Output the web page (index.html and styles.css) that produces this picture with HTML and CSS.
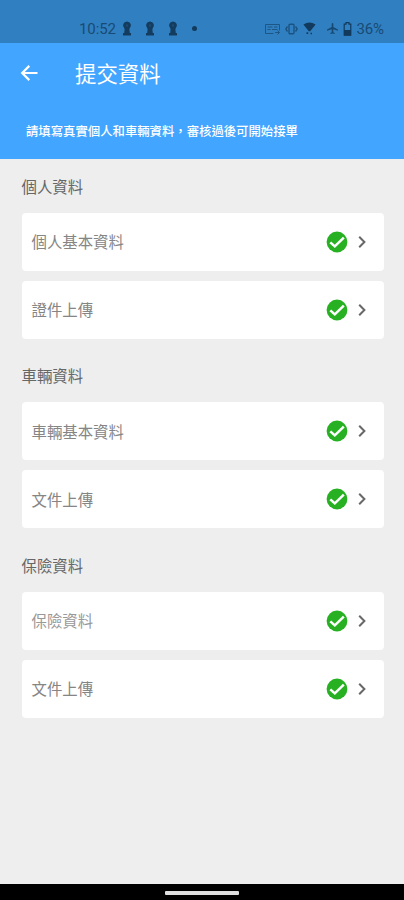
FILE: index.html
```
<!DOCTYPE html>
<html lang="zh-Hant">
<head>
<meta charset="utf-8">
<title>提交資料</title>
<link rel="stylesheet" href="styles.css">
</head>
<body>
<svg class="defs" width="0" height="0">
  <symbol id="pawn" viewBox="0 0 10 15"><path d="M5 .4a4 4 0 0 1 2.600 7L7.400 8.500l.4 3.500H9v2.600H1V12h1.200l.4-3.500-.2-1.100A4 4 0 0 1 5 .4z"/><path class="hole" d="M4.500 3.600h1v1.900h-1z"/></symbol>
  <symbol id="check" viewBox="0 0 22 22"><circle cx="11" cy="11" r="10.400" fill="#27b122"/><path d="M4.300 11.300l4.500 4.100 9-8.800" fill="none" stroke="#fff" stroke-width="2.500"/></symbol>
  <symbol id="chevron" viewBox="0 0 8 12"><path d="M1.200.8L6.400 6l-5.200 5.200" fill="none" stroke="#686868" stroke-width="2"/></symbol>
</svg>
<div class="screen">
  <div class="status">
    <span class="time">10:52</span>
    <div class="notices">
      <svg width="10" height="15"><use href="#pawn"/></svg>
      <svg width="10" height="15"><use href="#pawn"/></svg>
      <svg width="10" height="15"><use href="#pawn"/></svg>
      <i class="dot"></i>
    </div>
    <div class="system">
      <svg class="cast" width="15" height="12" viewBox="0 0 15 12" fill="none" stroke="#1d5584" stroke-width="1"><path d="M8.500 10.500H.5v-9h14v6M2.500 4h5M9 4h3.500M2.500 6.500h3M7 6.500h5.500M10 9.500h4.500M12.500 7.500l2 2-2 2"/></svg>
      <svg class="vibrate" width="13" height="12" viewBox="0 0 13 12" fill="none" stroke="#1b5281" stroke-width="1.400"><rect x="4" y="1.200" width="5" height="9.600" rx="1"/><path d="M2.500 3.500L.8 6l1.700 2.500M10.500 3.500L12.200 6l-1.700 2.500"/></svg>
      <svg class="wifi" width="13" height="13" viewBox="0 0 13 13" fill="#123a5c"><path d="M.4 2.500Q6.500-1.400 12.600 2.500L7.200 9.300H5.800zM3.500 10.300h1.700v1.700H3.500zM7.500 10.800h1.500v1.500H7.500z"/></svg>
      <svg class="plane" width="13" height="13" viewBox="0 0 24 24" fill="#174872"><path d="M22 16v-2l-8.500-5V3.500a1.500 1.500 0 0 0-3 0V9L2 14v2l8.500-2.500V19L8 20.500V22l4-1 4 1v-1.500L13.500 19v-5.500z"/></svg>
      <svg class="battery" width="9" height="14" viewBox="0 0 9 14"><path d="M3 .7h3v1.500h1.800v11H1.200v-11H3z" fill="none" stroke="#123a5c" stroke-width="1.200"/><path d="M1 8h7v5.500H1z" fill="#123a5c"/></svg>
      <span class="percent">36%</span>
    </div>
  </div>
  <header>
    <div class="bar">
      <svg width="18" height="16" viewBox="0 0 18 16" fill="none" stroke="#fff" stroke-width="2.200"><path d="M17.500 8H2.500M9.300.9L2.200 8l7.100 7.100"/></svg>
      <h1>提交資料</h1>
    </div>
    <p>請填寫真實個人和車輛資料，審核過後可開始接單</p>
  </header>
  <main>
    <section>
      <h2>個人資料</h2>
      <div class="card"><span>個人基本資料</span><svg class="check"><use href="#check"/></svg><svg class="chevron"><use href="#chevron"/></svg></div>
      <div class="card"><span>證件上傳</span><svg class="check"><use href="#check"/></svg><svg class="chevron"><use href="#chevron"/></svg></div>
    </section>
    <section>
      <h2>車輛資料</h2>
      <div class="card"><span>車輛基本資料</span><svg class="check"><use href="#check"/></svg><svg class="chevron"><use href="#chevron"/></svg></div>
      <div class="card"><span>文件上傳</span><svg class="check"><use href="#check"/></svg><svg class="chevron"><use href="#chevron"/></svg></div>
    </section>
    <section>
      <h2>保險資料</h2>
      <div class="card"><span class="light">保險資料</span><svg class="check"><use href="#check"/></svg><svg class="chevron"><use href="#chevron"/></svg></div>
      <div class="card"><span>文件上傳</span><svg class="check"><use href="#check"/></svg><svg class="chevron"><use href="#chevron"/></svg></div>
    </section>
  </main>
  <footer><i class="handle"></i></footer>
</div>
</body>
</html>
```
FILE: styles.css
```
* { box-sizing: border-box; }
body { margin: 0; font-family: Roboto, "Noto Sans CJK TC", sans-serif; }
svg { display: block; flex: none; }
h1, h2, p { margin: 0; font-weight: 400; font-family: "Noto Sans CJK TC", sans-serif; white-space: nowrap; }
.defs { position: absolute; }
.screen { width: 404px; height: 900px; display: flex; flex-direction: column; background: #eee; overflow: hidden; }

.status { height: 43px; flex: none; background: #3080c1; display: flex; align-items: center; padding: 14px 20px 0 79px; color: #194a74; font-size: 15px; }
.time { width: 43px; letter-spacing: -0.1px; }
.notices { display: flex; align-items: center; gap: 13px; fill: #143c5e; }
.hole { fill: #235f91; }
.dot { width: 5px; height: 5px; border-radius: 50%; background: #123a5c; margin-left: 1px; }
.system { margin-left: auto; display: flex; align-items: center; }
.vibrate { margin-left: 5px; }
.wifi { margin-left: 5px; }
.plane { margin-left: 10px; }
.battery { margin-left: 4px; }
.percent { margin-left: 4px; letter-spacing: -0.1px; }

header { height: 115.5px; flex: none; background: #42a5ff; color: #fff; }
.bar { height: 59px; display: flex; align-items: center; padding-left: 20px; }
.bar h1 { margin-left: 37px; font-size: 21.4px; line-height: 30px; }
header p { padding: 19px 0 0 26px; font-size: 12.36px; line-height: 20px; font-weight: 500; }

main { flex: 1; padding: 0 20px 0 21.5px; }
section { height: 189.7px; }
h2 { height: 54.2px; padding-top: 16px; font-size: 15.4px; line-height: 22px; color: #666; }
.card { height: 58px; margin-bottom: 10px; display: flex; align-items: center; padding: 0 18.5px 0 10px; border-radius: 4px; background: #fff; font-family: "Noto Sans CJK TC", sans-serif; font-size: 15.4px; color: #858585; }
.card span { padding-bottom: 1.5px; }
.card .light { color: #999; }
.card .check { width: 22px; height: 22px; margin-left: auto; }
.card .chevron { width: 8px; height: 12px; margin-left: 10px; }

footer { height: 16px; flex: none; background: #000; display: flex; justify-content: center; padding-top: 7px; }
.handle { width: 74px; height: 4px; border-radius: 1px; background: #e0e0e0; }
```
